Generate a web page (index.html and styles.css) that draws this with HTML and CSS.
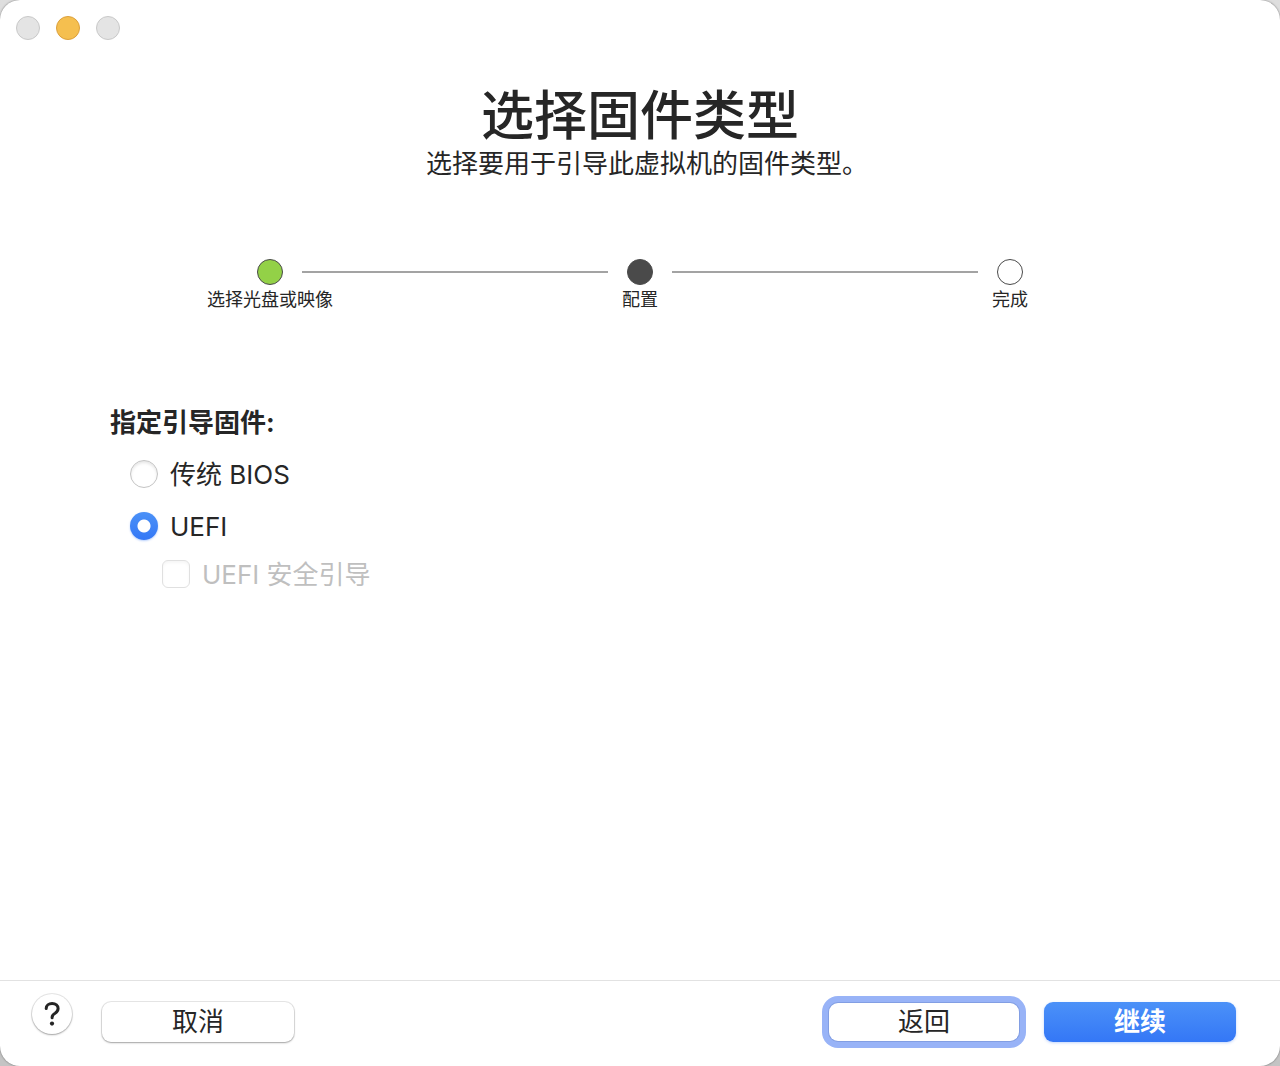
FILE: index.html
```html
<!DOCTYPE html>
<html lang="zh-CN">
<head>
<meta charset="utf-8">
<meta name="viewport" content="width=device-width, initial-scale=1">
<title>选择固件类型</title>
<link rel="stylesheet" href="styles.css">
</head>
<body>
<form class="window">
  <div class="titlebar">
    <button class="light" type="button" aria-label="关闭" disabled></button>
    <button class="light light-minimize" type="button" aria-label="最小化"></button>
    <button class="light" type="button" aria-label="缩放" disabled></button>
  </div>

  <header class="heading">
    <h1 class="title">选择固件类型</h1>
    <p class="subtitle">选择要用于引导此虚拟机的固件类型。</p>
  </header>

  <ol class="steps">
    <li class="step step-done"><span class="marker"></span><span class="step-label">选择光盘或映像</span></li>
    <li class="step step-current" aria-current="step"><span class="marker"></span><span class="step-label">配置</span></li>
    <li class="step"><span class="marker"></span><span class="step-label">完成</span></li>
  </ol>

  <main class="content">
    <fieldset class="options">
      <legend class="legend">指定引导固件:</legend>
      <div class="option">
        <input class="radio" type="radio" name="firmware" id="bios">
        <label for="bios">传统 BIOS</label>
      </div>
      <div class="option">
        <input class="radio" type="radio" name="firmware" id="uefi" checked>
        <label for="uefi">UEFI</label>
      </div>
      <div class="option option-nested">
        <input class="checkbox" type="checkbox" id="secure" disabled>
        <label for="secure">UEFI 安全引导</label>
      </div>
    </fieldset>
  </main>

  <footer class="footer">
    <button class="help" type="button" aria-label="帮助">
      <svg width="16" height="24" viewBox="0 0 16 24" aria-hidden="true">
        <path d="M2.2 6.5C2.2 3.4 4.8 1.6 8.1 1.6C11.7 1.6 14.1 3.6 14.1 6.6C14.1 8.8 13 10.1 11.1 11.3C8.9 12.6 8.1 13.4 8.1 15.4V15.8" fill="none" stroke="#252525" stroke-width="3" stroke-linecap="round" stroke-linejoin="round"/>
        <circle cx="8" cy="21.6" r="2.1" fill="#252525"/>
      </svg>
    </button>
    <button class="button" type="button">取消</button>
    <span class="spacer"></span>
    <button class="button button-focused" type="button">返回</button>
    <button class="button button-primary" type="submit">继续</button>
  </footer>
</form>
</body>
</html>
```
FILE: styles.css
```css
* {
  box-sizing: border-box;
}

body {
  margin: 0;
  background: linear-gradient(#dedede, #c4c4c4);
  color: #262626;
  font-family: Inter, "Noto Sans CJK SC", sans-serif;
  font-size: 26px;
  line-height: 32px;
}

.window {
  display: flex;
  flex-direction: column;
  min-height: 100vh;
  border-radius: 20px;
  background: #fff;
  box-shadow: 0 0 2px rgba(0, 0, 0, 0.5);
}

.titlebar {
  display: flex;
  gap: 16px;
  padding: 16px;
}

.light {
  width: 24px;
  height: 24px;
  padding: 0;
  border: 1px solid #c9c9c9;
  border-radius: 50%;
  background: #e4e4e4;
}

.light-minimize {
  border-color: #dca03c;
  background: #f5bf4f;
}

.heading {
  padding-top: 28px;
  text-align: center;
}

.title {
  margin: 0;
  font-size: 53px;
  font-weight: 500;
  line-height: 64px;
}

/* The indent balances the blank half of the closing full stop. */
.subtitle {
  margin: 0;
  text-indent: 14px;
}

.steps {
  display: grid;
  grid-template-columns: repeat(3, 1fr);
  margin: 79px 85px 0;
  padding: 0;
  list-style: none;
}

/* Each step draws half of the connector on either side of its marker. */
.step {
  display: grid;
  grid-template-columns: 1fr 26px 1fr;
  column-gap: 19px;
  align-items: center;
}

.step::before,
.step::after {
  content: "";
  grid-row: 1;
  height: 2px;
  background: #a3a3a3;
}

.step::before {
  grid-column: 1;
}

.step::after {
  grid-column: 3;
}

.step:first-child::before,
.step:last-child::after {
  visibility: hidden;
}

.marker {
  grid-area: 1 / 2;
  height: 26px;
  border: 1px solid #4a4a4a;
  border-radius: 50%;
  background: #fff;
}

.step-done .marker {
  background: #93d147;
}

.step-current .marker {
  background: #4a4a4a;
}

.step-label {
  grid-area: 2 / 1 / 3 / 4;
  font-size: 18px;
  line-height: 30px;
  text-align: center;
}

.content {
  flex: 1;
  padding: 92px 110px 40px;
}

.options {
  margin: 0;
  padding: 0;
  border: 0;
}

.legend {
  padding: 0;
  font-weight: 700;
}

.option {
  display: flex;
  align-items: center;
  gap: 12px;
  margin: 20px 0 0 20px;
}

.option-nested {
  margin: 16px 0 0 52px;
  color: #bfbfbf;
}

.radio,
.checkbox {
  flex: none;
  appearance: none;
  width: 28px;
  height: 28px;
  margin: 0 0 2px;
  border: 1px solid #c4c4c4;
  background: #fff;
  box-shadow: inset 0 2px 3px rgba(0, 0, 0, 0.1);
}

.radio {
  border-radius: 50%;
}

.radio:checked {
  border: 0;
  background: radial-gradient(circle, #fff 6px, transparent 7px), linear-gradient(#4b91f7, #3478f6);
  box-shadow: 0 1px 2px rgba(52, 120, 246, 0.35);
}

.checkbox {
  border-color: #e0e0e0;
  border-radius: 6px;
  box-shadow: inset 0 2px 3px rgba(0, 0, 0, 0.04);
}

.footer {
  display: flex;
  gap: 24px;
  padding: 21px 44px 24px 32px;
  border-top: 1px solid #e2e2e2;
}

.help,
.button {
  height: 40px;
  padding: 0;
  border: 0;
  background: #fff;
  color: inherit;
  box-shadow: 0 0 0 1px rgba(0, 0, 0, 0.09), 0 1px 2px rgba(0, 0, 0, 0.3);
}

.help {
  display: flex;
  align-items: center;
  justify-content: center;
  width: 40px;
  margin: -8px 6px 8px 0;
  border-radius: 50%;
}

.button {
  width: 192px;
  border-radius: 9px;
  font: inherit;
  line-height: 38px;
}

.spacer {
  flex: 1;
}

.button-focused {
  width: 190px;
  height: 38px;
  margin: 1px 1px 1px 0;
  line-height: 36px;
  box-shadow: 0 0 0 1px #829ee3, 0 0 0 7px #98b3f7;
}

.button-primary {
  background: linear-gradient(#4b91f8, #3477f6);
  color: #fff;
  font-weight: 600;
  box-shadow: 0 1px 3px rgba(52, 120, 246, 0.3);
}
```
